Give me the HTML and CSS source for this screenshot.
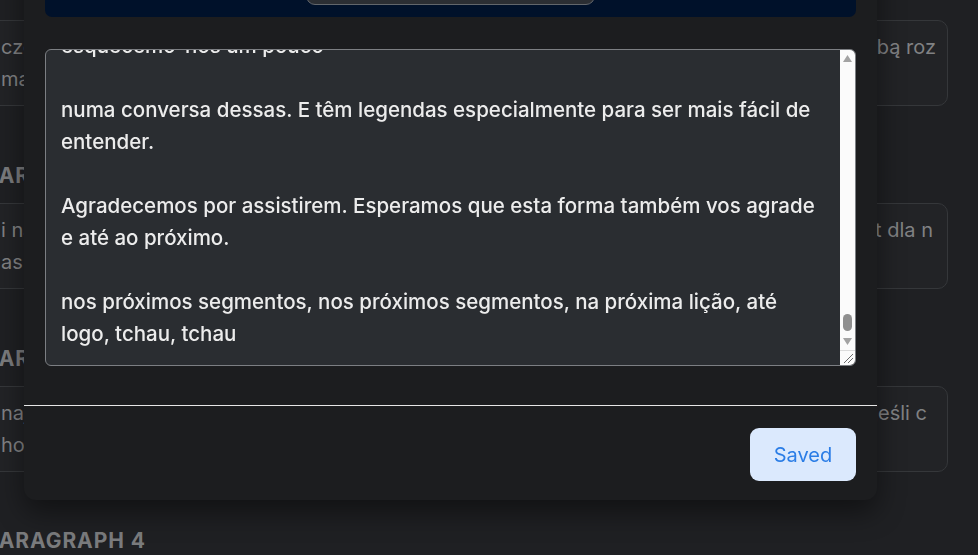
FILE: index.html
```html
<!DOCTYPE html>
<html lang="pt">
<head>
<meta charset="utf-8">
<title>Editor</title>
<link rel="stylesheet" href="styles.css">
</head>
<body>
<main class="page">
  <section class="section">
    <h2 class="heading">Paragraph 1</h2>
    <div class="card">
      <p class="line"><span>czoraj przyszliśmy tu razem</span><span>i chcieliśmy z sobą roz</span></p>
      <p class="line"><span>mamy dziś dla was nowe</span><span></span></p>
    </div>
  </section>
  <section class="section">
    <h2 class="heading">Paragraph 2</h2>
    <div class="card">
      <p class="line"><span>i na tym spotkaniu</span><span class="tail-2">jest dla n</span></p>
      <p class="line"><span>as wszystkich dzisiaj</span><span></span></p>
    </div>
  </section>
  <section class="section">
    <h2 class="heading">Paragraph 3</h2>
    <div class="card">
      <p class="line"><span>najlepiej będzie</span><span class="tail-3">jeśli c</span></p>
      <p class="line"><span>hodzi o to</span><span></span></p>
    </div>
  </section>
  <section class="section">
    <h2 class="heading heading-last">Paragraph 4</h2>
  </section>
</main>

<div class="modal">
  <div class="modal-body">
    <div class="player">
      <div class="pill"></div>
    </div>
    <div class="editor-wrap">
      <textarea class="editor" wrap="off" spellcheck="false">Olá a todos e bem-vindos a mais um episódio. Hoje vamos falar um
pouco sobre o dia a dia e sobre as coisas que fazemos em casa.

Eu acordo normalmente às sete horas da manhã, tomo o pequeno-almoço
e depois vou trabalhar.

Às vezes vou de autocarro, outras vezes vou a pé, porque gosto de
caminhar pela cidade.

Quando chego ao escritório, bebo um café com os meus colegas e
conversamos um pouco.

Depois começamos a trabalhar e o tempo passa muito depressa.

Ao almoço costumamos ir a um restaurante pequeno perto do escritório
onde a comida é muito boa.

À tarde temos normalmente reuniões e eu respondo aos e-mails que
chegaram durante o dia.

Quando saio do trabalho vou ao ginásio ou encontro-me com amigos
num café.

Ao fim de semana gosto de ir à praia, ler um livro ou ver um filme
com a minha família.

E vocês, o que gostam de fazer no vosso tempo livre? Escrevam nos
comentários.

Agora vamos ouvir uma pequena conversa entre dois amigos que se
encontram na rua.

— Olá, tudo bem? Há quanto tempo!

— Tudo ótimo, e contigo? Não te via desde o verão passado.

— Pois é, estive muito ocupado com o trabalho novo.

— A sério? Onde estás a trabalhar agora?

— Numa empresa de tecnologia, aqui perto do centro.

— Que bom! E estás a gostar?

— Estou, as pessoas são simpáticas e aprendo muito todos os dias.

— Temos de combinar um jantar um dia destes.

— Claro, combinamos para a próxima semana.

Como podem ver, é uma conversa muito simples, com expressões que
usamos todos os dias.

Repitam as frases em voz alta para praticar a pronúncia e a entoação.

Se tiverem dúvidas, podem sempre voltar atrás e ouvir outra vez.

Vamos então continuar e ver mais alguns exemplos. Às vezes
esquecemo-nos um pouco

numa conversa dessas. E têm legendas especialmente para ser mais fácil de
entender.

Agradecemos por assistirem. Esperamos que esta forma também vos agrade
e até ao próximo.

nos próximos segmentos, nos próximos segmentos, na próxima lição, até
logo, tchau, tchau</textarea>
      <div class="scrollbar" aria-hidden="true">
        <svg class="arrow" width="9" height="7" viewBox="0 0 9 7"><path d="M0 7 L4.5 0 L9 7 Z" fill="#a3a3a3"/></svg>
        <div class="track"><div class="thumb"></div></div>
        <svg class="arrow" width="9" height="7" viewBox="0 0 9 7"><path d="M0 0 L4.5 7 L9 0 Z" fill="#a3a3a3"/></svg>
        <div class="resizer">
          <svg width="14" height="14" viewBox="0 0 14 14"><path d="M3 12 L12 3 M7 12 L12 7" stroke="#6b6b6b" stroke-width="1"/></svg>
        </div>
      </div>
    </div>
  </div>
  <div class="modal-footer">
    <button class="saved" type="button">Saved</button>
  </div>
</div>
<script src="script.js"></script>
</body>
</html>
```

FILE: styles.css
```css
* {
  box-sizing: border-box;
}

html, body {
  margin: 0;
  height: 100%;
  overflow: hidden;
}

body {
  background: #1f2023;
  font-family: Inter, "Noto Sans", sans-serif;
}

.page {
  width: 962px;
  margin: -77px 0 0 -14px;
}

.section {
  display: flex;
  flex-direction: column;
}

.heading {
  margin: 58px 0 15px;
  font-size: 21px;
  line-height: 24px;
  font-weight: 700;
  letter-spacing: 0.9px;
  text-transform: uppercase;
  color: #7a7b7d;
}

.heading-last {
  margin-top: 57px;
}

.card {
  height: 86px;
  padding: 10px 11px 10px 14px;
  border: 1px solid #35373a;
  border-radius: 10px;
  background: #222326;
}

.line {
  margin: 0;
  display: flex;
  justify-content: space-between;
  font-size: 20px;
  line-height: 32px;
  color: #808183;
  white-space: nowrap;
}

.tail-2 {
  padding-right: 3px;
}

.tail-3 {
  padding-right: 9px;
}

.modal {
  position: fixed;
  left: 24px;
  bottom: 55px;
  width: 853px;
  background: #1c1d1f;
  border-radius: 12px;
  box-shadow: 0 12px 28px rgba(0, 0, 0, 0.45);
  display: flex;
  flex-direction: column;
}

.modal-body {
  display: flex;
  flex-direction: column;
  gap: 32px;
  padding: 0 21px 39px;
}

.player {
  height: 160px;
  background: #00112a;
  border-radius: 0 0 7px 7px;
  display: flex;
  align-items: flex-end;
  justify-content: center;
  padding-bottom: 12px;
}

.pill {
  width: 289px;
  height: 42px;
  background: #2b2e33;
  border: 1px solid #62666b;
  border-radius: 9px;
}

.editor-wrap {
  position: relative;
  width: 811px;
  height: 317px;
}

.editor {
  display: block;
  width: 100%;
  height: 100%;
  margin: 0;
  padding: 15px 32px 15px 15px;
  background: #2a2d31;
  color: #ececec;
  border: 1px solid #7c7f83;
  border-radius: 6px;
  font-family: Inter, "Noto Sans", sans-serif;
  font-size: 20.5px;
  font-weight: 500;
  line-height: 32px;
  outline: none;
  overflow: hidden;
  resize: none;
}

.scrollbar {
  position: absolute;
  top: 1px;
  right: 1px;
  bottom: 1px;
  width: 15px;
  background: #fbfbfb;
  border-radius: 0 5px 5px 0;
  display: flex;
  flex-direction: column;
  align-items: center;
}

.arrow {
  flex: none;
  margin: 5px 0;
}

.track {
  flex: 1;
  width: 100%;
  display: flex;
  flex-direction: column;
  justify-content: flex-end;
  align-items: center;
  padding-bottom: 2px;
}

.thumb {
  width: 9px;
  height: 17px;
  border-radius: 5px;
  background: #8f8f8f;
}

.resizer {
  flex: none;
  width: 100%;
  height: 15px;
  border-top: 1px solid #dcdcdc;
  display: flex;
  align-items: flex-end;
  justify-content: flex-end;
}

.modal-footer {
  border-top: 1px solid #e6e6e6;
  padding: 22px 21px 19px;
  display: flex;
  justify-content: flex-end;
}

.saved {
  width: 106px;
  height: 53px;
  border: none;
  border-radius: 9px;
  background: #dbe9fd;
  color: #2b7de6;
  font-family: Inter, "Noto Sans", sans-serif;
  font-size: 20px;
  cursor: pointer;
}
```

FILE: script.js
```js
var ta = document.querySelector('.editor');
ta.scrollTop = ta.scrollHeight;
```
